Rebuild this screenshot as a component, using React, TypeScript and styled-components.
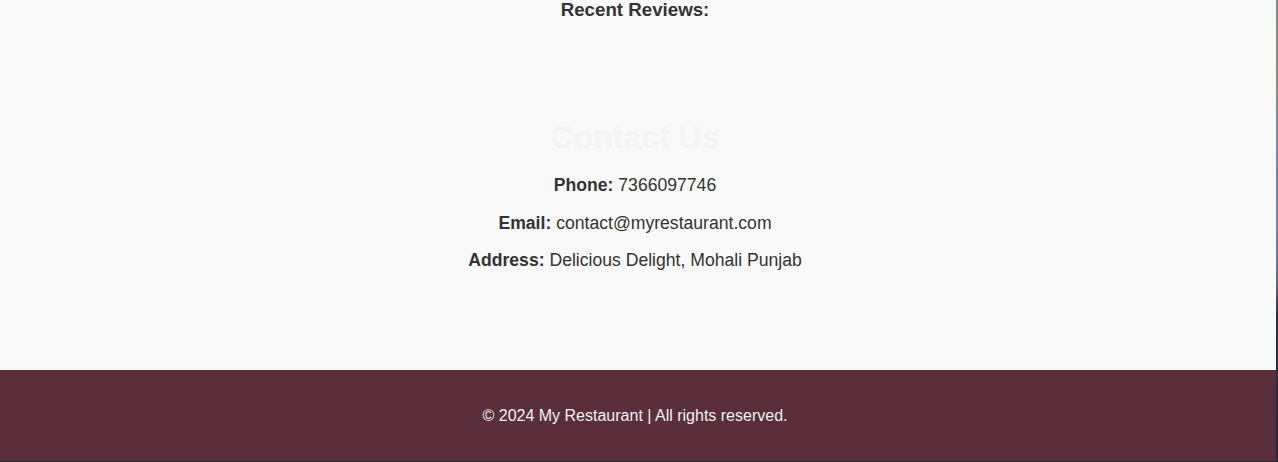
import React from "react";
import styled, { createGlobalStyle } from "styled-components";

const GlobalStyle = createGlobalStyle`
  html {
    background: linear-gradient(
      180deg,
      #7d8878 0%,
      #7f8d85 20%,
      #6f86ab 35%,
      #6a7fa6 55%,
      #59657a 62%,
      #2c3140 68%,
      #262a36 100%
    );
    height: 100%;
  }
  body {
    margin: 0;
    font-family: "Liberation Sans", Arial, sans-serif;
    color: #333;
  }
`;

const Page = styled.div`
  width: calc(100% - 2px);
  display: flex;
  flex-direction: column;
  background: #f9f9f9;
`;

const Section = styled.section<{ $bottom: number }>`
  text-align: center;
  padding: 0 6px ${(p) => p.$bottom}px 0;
`;

const ReviewsTitle = styled.h3`
  margin: 0;
  font-size: 18.72px;
  line-height: 20px;
  font-weight: 700;
  color: #333;
`;

const ContactTitle = styled.h2`
  margin: 0 0 19px;
  font-size: 32px;
  line-height: 37px;
  font-weight: 700;
  color: #f3f3f3;
`;

const InfoLine = styled.p`
  margin: 0 0 17.5px;
  font-size: 17.6px;
  line-height: 20px;
  color: #333;
  &:last-child {
    margin-bottom: 0;
  }
`;

const Label = styled.strong`
  font-weight: 700;
`;

const Footer = styled.footer`
  background: #5b2e3c;
  color: #f1eef0;
  text-align: center;
  padding: 37px 6px 36px 0;
  font-size: 16px;
  line-height: 18px;
`;

export default function App() {
  return (
    <>
      <GlobalStyle />
      <Page>
        <Section $bottom={99}>
          <ReviewsTitle>Recent Reviews:</ReviewsTitle>
        </Section>
        <Section $bottom={100}>
          <ContactTitle>Contact Us</ContactTitle>
          <InfoLine>
            <Label>Phone:</Label> 7366097746
          </InfoLine>
          <InfoLine>
            <Label>Email:</Label> contact@myrestaurant.com
          </InfoLine>
          <InfoLine>
            <Label>Address:</Label> Delicious Delight, Mohali Punjab
          </InfoLine>
        </Section>
        <Footer>© 2024 My Restaurant | All rights reserved.</Footer>
      </Page>
    </>
  );
}
